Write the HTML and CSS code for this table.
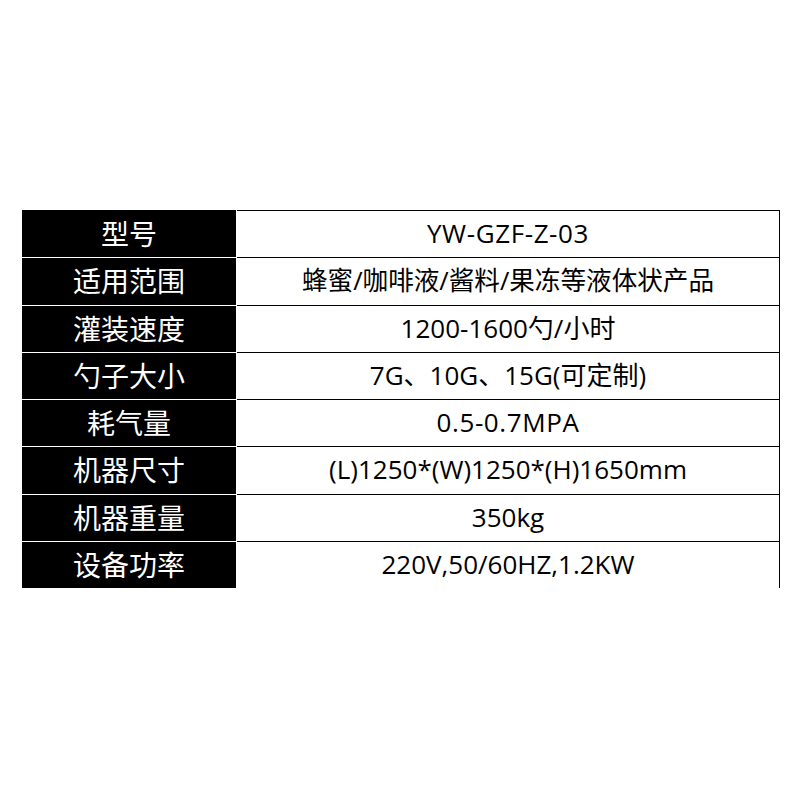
FILE: index.html
```html
<!DOCTYPE html>
<html lang="zh-CN">
<head>
<meta charset="utf-8">
<title>参数表</title>
<link rel="stylesheet" href="styles.css">
</head>
<body>
<div class="wrap">
  <div class="spec">
    <div class="k first">型号</div><div class="v first wide">YW-GZF-Z-03</div>
    <div class="k">适用范围</div><div class="v cjk">蜂蜜/咖啡液/酱料/果冻等液体状产品</div>
    <div class="k">灌装速度</div><div class="v">1200-1600勺/小时</div>
    <div class="k">勺子大小</div><div class="v">7G、10G、15G(可定制)</div>
    <div class="k">耗气量</div><div class="v wide">0.5-0.7MPA</div>
    <div class="k">机器尺寸</div><div class="v">(L)1250*(W)1250*(H)1650mm</div>
    <div class="k">机器重量</div><div class="v">350kg</div>
    <div class="k last">设备功率</div><div class="v last">220V,50/60HZ,1.2KW</div>
  </div>
</div>
</body>
</html>
```

FILE: styles.css
```css
html, body {
  margin: 0;
  padding: 0;
  background: #fff;
}
.wrap {
  padding: 210px 0 0 22px;
}
.spec {
  display: grid;
  grid-template-columns: 214px 544px;
  grid-auto-rows: 47.25px;
  width: 758px;
}
.k {
  background: #000;
  color: #fff;
  border-top: 1px solid #fff;
  display: flex;
  align-items: center;
  justify-content: center;
  font-family: "Noto Sans CJK SC", "Open Sans", sans-serif;
  font-size: 28px;
  line-height: 1;
  padding-bottom: 2px;
  box-sizing: border-box;
}
.k.first {
  border-top-color: #000;
}
.k.last {
  height: 48.25px;
}
.v {
  margin-left: 1px;
  border-top: 1px solid #000;
  border-right: 1px solid #000;
  display: flex;
  align-items: center;
  justify-content: center;
  color: #000;
  font-family: "Open Sans", "Noto Sans CJK SC", sans-serif;
  font-size: 26px;
  line-height: 1;
  box-sizing: border-box;
  padding-bottom: 2px;
}
.v.wide {
  letter-spacing: 0.6px;
}
.v.cjk {
  font-size: 25.6px;
}
.v.last {
  height: 48.25px;
  border-bottom: 1px solid #000;
}
```
